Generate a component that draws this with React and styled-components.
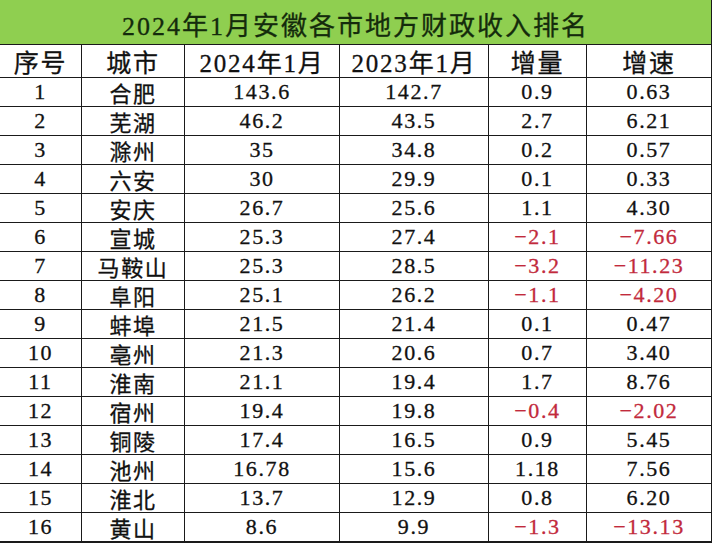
import React from "react";
import styled, { createGlobalStyle } from "styled-components";

const GlobalStyle = createGlobalStyle`
  html, body {
    margin: 0;
    padding: 0;
    background: #ffffff;
  }
  * {
    box-sizing: border-box;
  }
`;

const columns = ["序号", "城市", "2024年1月", "2023年1月", "增量", "增速"];

const rows = [
  ["1", "合肥", "143.6", "142.7", "0.9", "0.63"],
  ["2", "芜湖", "46.2", "43.5", "2.7", "6.21"],
  ["3", "滁州", "35", "34.8", "0.2", "0.57"],
  ["4", "六安", "30", "29.9", "0.1", "0.33"],
  ["5", "安庆", "26.7", "25.6", "1.1", "4.30"],
  ["6", "宣城", "25.3", "27.4", "-2.1", "-7.66"],
  ["7", "马鞍山", "25.3", "28.5", "-3.2", "-11.23"],
  ["8", "阜阳", "25.1", "26.2", "-1.1", "-4.20"],
  ["9", "蚌埠", "21.5", "21.4", "0.1", "0.47"],
  ["10", "亳州", "21.3", "20.6", "0.7", "3.40"],
  ["11", "淮南", "21.1", "19.4", "1.7", "8.76"],
  ["12", "宿州", "19.4", "19.8", "-0.4", "-2.02"],
  ["13", "铜陵", "17.4", "16.5", "0.9", "5.45"],
  ["14", "池州", "16.78", "15.6", "1.18", "7.56"],
  ["15", "淮北", "13.7", "12.9", "0.8", "6.20"],
  ["16", "黄山", "8.6", "9.9", "-1.3", "-13.13"],
];

const Sheet = styled.div`
  width: 712px;
  font-family: "Liberation Serif", "Noto Sans CJK SC", serif;
  color: #111;
  -webkit-text-stroke: 0.3px currentColor;
`;

const TitleBar = styled.div`
  height: 45px;
  background: #8fcf50;
  border-bottom: 1px solid #1a1a1a;
  border-right: 1px solid #1a1a1a;
  display: flex;
  align-items: center;
  justify-content: center;
  font-size: 26px;
  letter-spacing: 2px;
  color: #142b0c;
  padding-top: 2px;
`;

const Grid = styled.div`
  display: grid;
  grid-template-columns: 82px 103px 155px 149px 98px 125px;
`;

const Cell = styled.div`
  height: ${(p) => (p.$head ? "33px" : p.$last ? "30px" : "29px")};
  border-right: 1px solid #1a1a1a;
  border-bottom: ${(p) => (p.$last ? "2px" : "1px")} solid #1a1a1a;
  display: flex;
  align-items: center;
  justify-content: center;
  font-size: ${(p) => (p.$head ? "25px" : "22px")};
  letter-spacing: ${(p) => (p.$head ? "1.8px" : "1.6px")};
  color: ${(p) => (p.$neg ? "#c22a3c" : "#111")};
  white-space: nowrap;
`;

export default function App() {
  return (
    <>
      <GlobalStyle />
      <Sheet>
        <TitleBar>2024年1月安徽各市地方财政收入排名</TitleBar>
        <Grid>
          {columns.map((c) => (
            <Cell key={c} $head>
              {c}
            </Cell>
          ))}
          {rows.map((r, i) =>
            r.map((v, j) => (
              <Cell
                key={i + "-" + j}
                $neg={v.startsWith("-")}
                $last={i === rows.length - 1}
              >
                {v.startsWith("-") ? "−" + v.slice(1) : v}
              </Cell>
            ))
          )}
        </Grid>
      </Sheet>
    </>
  );
}
